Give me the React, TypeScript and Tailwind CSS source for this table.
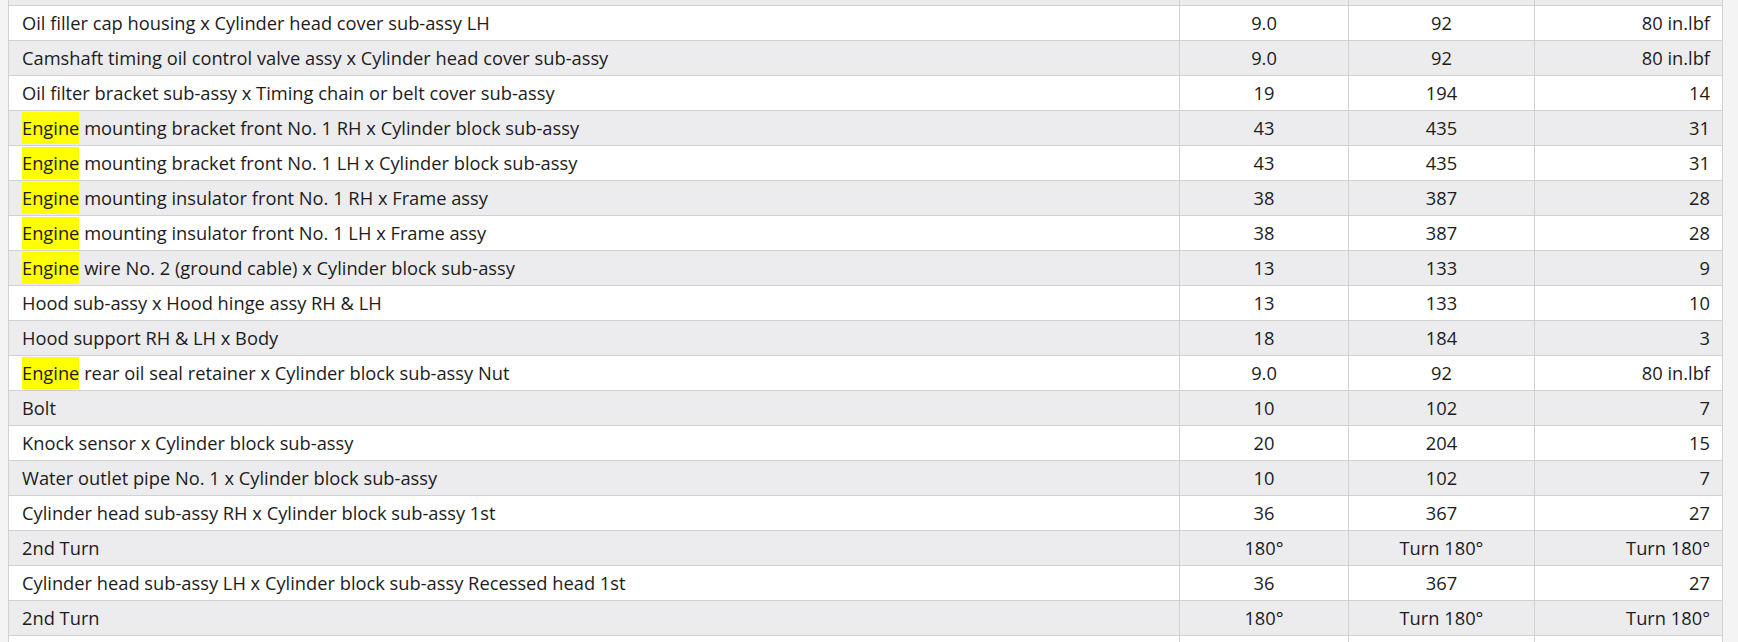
const rows: [string, string, string, string, boolean?][] = [
  ['Oil filler cap housing x Cylinder head cover sub-assy LH', '9.0', '92', '80 in.lbf'],
  ['Camshaft timing oil control valve assy x Cylinder head cover sub-assy', '9.0', '92', '80 in.lbf'],
  ['Oil filter bracket sub-assy x Timing chain or belt cover sub-assy', '19', '194', '14'],
  [' mounting bracket front No. 1 RH x Cylinder block sub-assy', '43', '435', '31', true],
  [' mounting bracket front No. 1 LH x Cylinder block sub-assy', '43', '435', '31', true],
  [' mounting insulator front No. 1 RH x Frame assy', '38', '387', '28', true],
  [' mounting insulator front No. 1 LH x Frame assy', '38', '387', '28', true],
  [' wire No. 2 (ground cable) x Cylinder block sub-assy', '13', '133', '9', true],
  ['Hood sub-assy x Hood hinge assy RH & LH', '13', '133', '10'],
  ['Hood support RH & LH x Body', '18', '184', '3'],
  [' rear oil seal retainer x Cylinder block sub-assy Nut', '9.0', '92', '80 in.lbf', true],
  ['Bolt', '10', '102', '7'],
  ['Knock sensor x Cylinder block sub-assy', '20', '204', '15'],
  ['Water outlet pipe No. 1 x Cylinder block sub-assy', '10', '102', '7'],
  ['Cylinder head sub-assy RH x Cylinder block sub-assy 1st', '36', '367', '27'],
  ['2nd Turn', '180°', 'Turn 180°', 'Turn 180°'],
  ['Cylinder head sub-assy LH x Cylinder block sub-assy Recessed head 1st', '36', '367', '27'],
  ['2nd Turn', '180°', 'Turn 180°', 'Turn 180°'],
];

function Row({ cells, gray, h }: { cells: [string, string, string, string, boolean?]; gray: boolean; h: string }) {
  const [name, a, b, c, hl] = cells;
  return (
    <div className={`flex shrink-0 border-l border-b border-[#d1d1d1] ${h} ${gray ? 'bg-[#ececee]' : 'bg-white'}`}>
      <div className="w-[1171px] shrink-0 border-r border-[#d1d1d1] pl-[13px] flex items-center whitespace-nowrap">
        {hl && <span className="bg-[#ffff00] py-[2px]">Engine</span>}
        <span className="whitespace-pre">{name}</span>
      </div>
      <div className="w-[169px] shrink-0 border-r border-[#d1d1d1] flex items-center justify-center">{a}</div>
      <div className="w-[186px] shrink-0 border-r border-[#d1d1d1] flex items-center justify-center">{b}</div>
      <div className="w-[188px] shrink-0 border-r border-[#d1d1d1] pr-[12px] flex items-center justify-end">{c}</div>
    </div>
  );
}

export default function App() {
  return (
    <div className="w-[1738px] h-[642px] overflow-hidden flex bg-white text-[#1c1c1c] text-[18.3px] font-['Open_Sans',sans-serif]">
      <div className="w-[8px] shrink-0 bg-[#f4f4f4]" />
      <div className="w-[1715px] shrink-0 flex flex-col">
        <Row cells={['', '', '', '']} gray h="h-[6px]" />
        {rows.map((r, i) => (
          <Row key={i} cells={r} gray={i % 2 === 1} h="h-[35px]" />
        ))}
        <Row cells={['', '', '', '']} gray={false} h="h-[35px]" />
      </div>
      <div className="flex-1 bg-[#f4f4f4]" />
    </div>
  );
}
